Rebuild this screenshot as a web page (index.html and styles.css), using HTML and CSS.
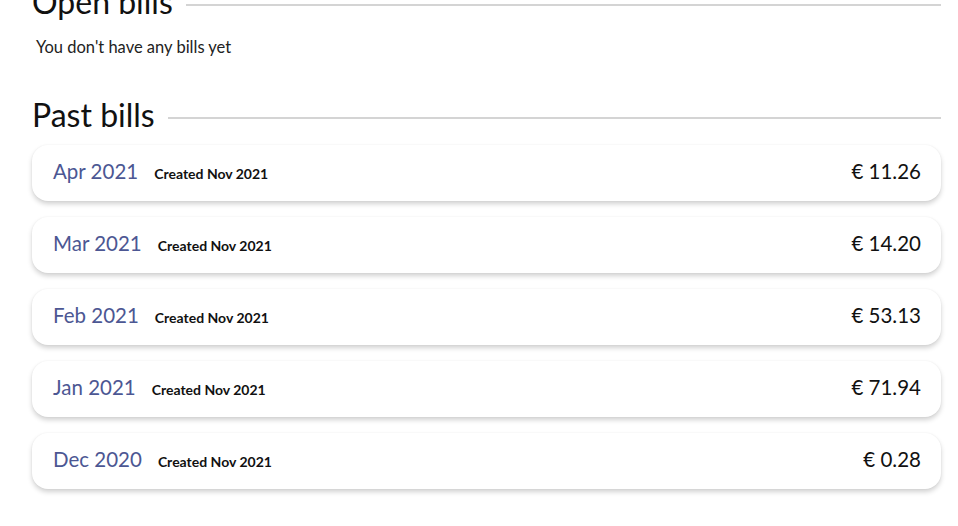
FILE: index.html
```html
<!DOCTYPE html>
<html lang="en">
<head>
  <meta charset="UTF-8" />
  <title>Bills</title>
  <meta name="viewport" content="width=device-width, initial-scale=1.0" />
  <link rel="stylesheet" href="styles.css">
</head>
<body>

<div id="page">
  <h2 class="section-title">Open bills</h2>
  <p class="empty">You don't have any bills yet</p>

  <h2 class="section-title">Past bills</h2>

  <div class="bills">
    <div class="bill">
      <span class="month">Apr 2021</span>
      <span class="created">Created Nov 2021</span>
      <span class="amount">€ 11.26</span>
    </div>
    <div class="bill">
      <span class="month">Mar 2021</span>
      <span class="created">Created Nov 2021</span>
      <span class="amount">€ 14.20</span>
    </div>
    <div class="bill">
      <span class="month">Feb 2021</span>
      <span class="created">Created Nov 2021</span>
      <span class="amount">€ 53.13</span>
    </div>
    <div class="bill">
      <span class="month">Jan 2021</span>
      <span class="created">Created Nov 2021</span>
      <span class="amount">€ 71.94</span>
    </div>
    <div class="bill">
      <span class="month">Dec 2020</span>
      <span class="created">Created Nov 2021</span>
      <span class="amount">€ 0.28</span>
    </div>
  </div>
</div>

</body>
</html>
```

FILE: styles.css
```css
body {
  font-family: 'Lato', 'Noto Sans', sans-serif;
  background: #fff;
  color: #1a1a1a;
  margin: 0;
}

#page {
  margin: -16px 17px 0 32px;
}

.section-title {
  display: flex;
  align-items: center;
  gap: 13px;
  margin: 0;
  font-size: 32px;
  font-weight: 400;
  line-height: 36px;
  color: #111;
}

.section-title::after {
  content: "";
  flex: 1;
  height: 2px;
  background: #d4d4d4;
  margin-top: 6px;
}

.empty {
  margin: 17px 0 40px 4px;
  font-size: 16.5px;
  color: #222;
}

.bills {
  margin-top: 12px;
}

.bill {
  display: flex;
  align-items: baseline;
  height: 56px;
  box-sizing: border-box;
  padding: 14px 20px 0 21px;
  margin-bottom: 16px;
  background: #fff;
  border-radius: 16px;
  box-shadow: 0 3px 5px rgba(0,0,0,0.18), 0 0 2px rgba(0,0,0,0.05);
}

.month {
  font-size: 20.5px;
  color: #4c5793;
}

.created {
  margin-left: 16px;
  font-size: 14px;
  font-weight: 700;
  color: #111;
}

.amount {
  margin-left: auto;
  font-size: 20.5px;
  color: #111;
}
```
